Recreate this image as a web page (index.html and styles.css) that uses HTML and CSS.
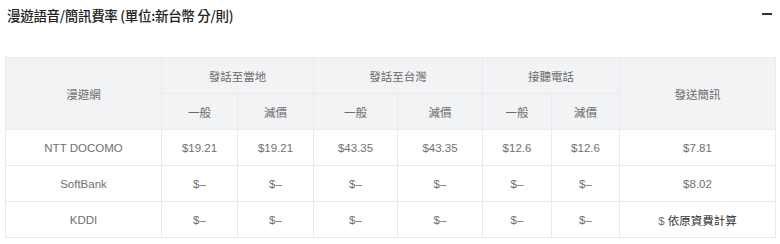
FILE: index.html
```html
<!DOCTYPE html>
<html lang="zh-Hant">
<head>
<meta charset="utf-8">
<title>漫遊語音/簡訊費率</title>
<link rel="stylesheet" href="styles.css">
</head>
<body>
<section class="rates">
  <div class="rates-head">
    <h2 class="rates-title">漫遊語音/簡訊費率 (單位:新台幣 分/則)</h2>
    <span class="collapse-icon" aria-label="收合"></span>
  </div>
  <table class="rate-table">
    <colgroup>
      <col class="c-net">
      <col class="c-a"><col class="c-a">
      <col class="c-b"><col class="c-b2">
      <col class="c-c"><col class="c-c2">
      <col class="c-net">
    </colgroup>
    <thead>
      <tr>
        <th rowspan="2">漫遊網</th>
        <th colspan="2">發話至當地</th>
        <th colspan="2">發話至台灣</th>
        <th colspan="2">接聽電話</th>
        <th rowspan="2">發送簡訊</th>
      </tr>
      <tr>
        <th>一般</th><th>減價</th>
        <th>一般</th><th>減價</th>
        <th>一般</th><th>減價</th>
      </tr>
    </thead>
    <tbody>
      <tr>
        <td>NTT DOCOMO</td>
        <td>$19.21</td><td>$19.21</td>
        <td>$43.35</td><td>$43.35</td>
        <td>$12.6</td><td>$12.6</td>
        <td>$7.81</td>
      </tr>
      <tr>
        <td>SoftBank</td>
        <td>$–</td><td>$–</td>
        <td>$–</td><td>$–</td>
        <td>$–</td><td>$–</td>
        <td>$8.02</td>
      </tr>
      <tr>
        <td>KDDI</td>
        <td>$–</td><td>$–</td>
        <td>$–</td><td>$–</td>
        <td>$–</td><td>$–</td>
        <td>$ <span class="strong">依原資費計算</span></td>
      </tr>
    </tbody>
  </table>
</section>
</body>
</html>
```

FILE: styles.css
```css
* { box-sizing: border-box; }

body {
  margin: 0;
  background: #fff;
  font-family: "Liberation Sans", "Noto Sans CJK TC", sans-serif;
  color: #333;
}

.rates {
  padding: 0 5px;
}

.rates-head {
  display: flex;
  align-items: center;
  justify-content: space-between;
  height: 30px;
  padding: 0 3px 0 2px;
  margin-bottom: 27px;
}

.rates-title {
  margin: 0;
  font-size: 13.5px;
  font-weight: 500;
  color: #222;
  font-family: "Noto Sans CJK TC", sans-serif;
  letter-spacing: -0.3px;
}

.collapse-icon {
  display: block;
  width: 10px;
  height: 2px;
  background: #333;
  margin-top: -2px;
}

.rate-table {
  width: 770px;
  border-collapse: collapse;
  table-layout: fixed;
  font-size: 11.5px;
  color: #707070;
}

.c-net { width: 156px; }
.c-a { width: 76px; }
.c-b { width: 84px; }
.c-b2 { width: 85px; }
.c-c { width: 69px; }
.c-c2 { width: 68px; }

.rate-table tr { height: 36px; }

.rate-table th,
.rate-table td {
  border: 1px solid #e8eaee;
  text-align: center;
  vertical-align: middle;
  padding: 0;
  font-weight: 400;
}

.rate-table th {
  background: #f2f3f5;
  color: #6a6a6a;
}

.rate-table .strong {
  color: #333;
}
```
